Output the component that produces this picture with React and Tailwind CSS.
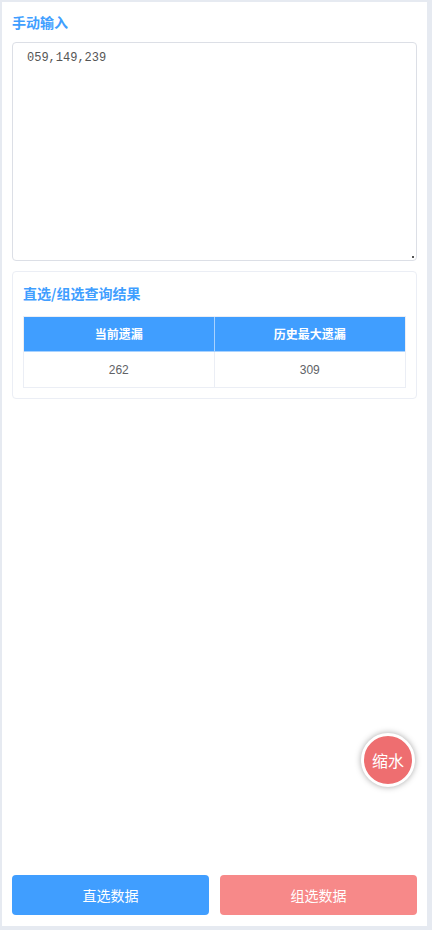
import React from "react";

export default function App() {
  const cjk = { fontFamily: '"Noto Sans CJK SC", "Noto Sans", sans-serif' };
  return (
    <div className="w-[432px] h-[930px] bg-[#e6eaf1] pt-[2px] pl-[2px] pr-[5px] pb-[4px]" style={cjk}>
      <div className="relative h-full bg-white flex flex-col px-[10px] pt-[10px] pb-[11px]">
        <div className="h-[20px] leading-[20px] text-[14px] font-bold text-[#409eff]">手动输入</div>
        <div className="relative mt-[10px]">
          <textarea
            readOnly
            defaultValue="059,149,239"
            className="block h-[219px] w-full resize-none border border-[#dcdfe6] rounded-[4px] px-[14px] py-[6px] text-[12px] leading-[18px] text-[#555] outline-none"
            style={{ fontFamily: '"Liberation Mono", monospace' }}
          />
          <div className="absolute right-[3px] bottom-[3px] w-[2px] h-[2px] bg-[#555]" />
        </div>
        <div className="mt-[10px] border border-[#ebeef5] rounded-[4px] px-[10px] pt-[10px] pb-[10px]">
          <div className="h-[22px] leading-[22px] text-[14px] font-bold text-[#409eff]">直选/组选查询结果</div>
          <div className="mt-[12px] border border-[#ebeef5]">
            <div className="grid grid-cols-2 bg-[#409eff] h-[35px] border-b border-[#a8d2ff]">
              <div className="flex items-center justify-center text-white text-[12px] font-bold border-r border-[#a8d2ff]">当前遗漏</div>
              <div className="flex items-center justify-center text-white text-[12px] font-bold">历史最大遗漏</div>
            </div>
            <div className="grid grid-cols-2 h-[35px]">
              <div className="flex items-center justify-center text-[#606266] text-[12px] border-r border-[#ebeef5]" style={{ fontFamily: '"Liberation Sans", Arial, sans-serif' }}>262</div>
              <div className="flex items-center justify-center text-[#606266] text-[12px]" style={{ fontFamily: '"Liberation Sans", Arial, sans-serif' }}>309</div>
            </div>
          </div>
        </div>

        <div className="flex-1" />

        <div className="flex gap-[11px]">
          <button className="flex-1 h-[40px] rounded-[4px] bg-[#409eff] text-white text-[14px]">直选数据</button>
          <button className="flex-1 h-[40px] rounded-[4px] bg-[#f78989] text-white text-[14px]">组选数据</button>
        </div>

        <div className="absolute left-[359px] top-[731px] w-[54px] h-[54px] rounded-full bg-[#ee6e70] border-[3px] border-white shadow-[0_0_6px_rgba(0,0,0,0.35)] flex items-center justify-center text-white text-[16px]">
          缩水
        </div>
      </div>
    </div>
  );
}
